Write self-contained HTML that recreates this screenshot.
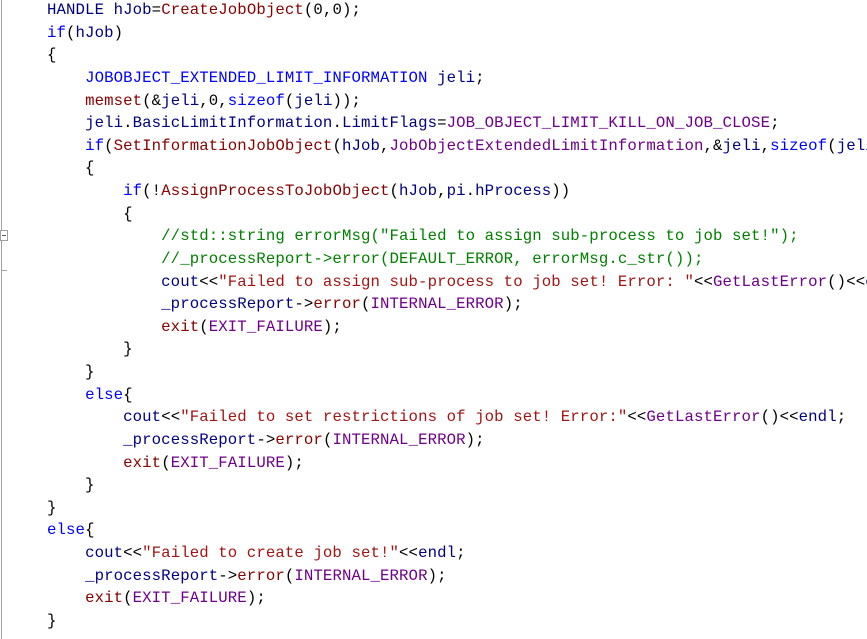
<!DOCTYPE html>
<html><head><style>
body{margin:0;background:#fff;width:867px;height:639px;overflow:hidden;position:relative}
pre{margin:0;position:absolute;left:47px;top:-1px;font-family:"Liberation Mono",monospace;font-size:15.7px;letter-spacing:0.1px;line-height:22.63px;color:#000;white-space:pre}
.k{color:#0000ff}.f{color:#880000}.n{color:#000080}.m{color:#6f008a}.s{color:#a31515}.c{color:#008000}
.bar{position:absolute;left:1px;top:0;width:1px;height:639px;background:#a0a0a0}
.box{position:absolute;left:0;top:230px;width:6px;height:9px;border:1px solid #a0a0a0;background:#fff}
.box:after{content:"";position:absolute;left:1px;top:4px;width:4px;height:1px;background:#555}
.tick{position:absolute;left:1px;top:270px;width:6px;height:1px;background:#a0a0a0}
</style></head><body>
<div class="bar"></div><div class="box"></div><div class="tick"></div>
<pre><span class="n">HANDLE</span> <span class="n">hJob</span>=<span class="f">CreateJobObject</span>(0,0);
<span class="k">if</span>(<span class="n">hJob</span>)
{
    <span class="k">JOBOBJECT_EXTENDED_LIMIT_INFORMATION</span> <span class="n">jeli</span>;
    <span class="f">memset</span>(&amp;<span class="n">jeli</span>,0,<span class="k">sizeof</span>(<span class="n">jeli</span>));
    <span class="n">jeli</span>.<span class="n">BasicLimitInformation</span>.<span class="n">LimitFlags</span>=<span class="m">JOB_OBJECT_LIMIT_KILL_ON_JOB_CLOSE</span>;
    <span class="k">if</span>(<span class="f">SetInformationJobObject</span>(<span class="n">hJob</span>,<span class="m">JobObjectExtendedLimitInformation</span>,&amp;<span class="n">jeli</span>,<span class="k">sizeof</span>(<span class="n">jeli</span>)))
    {
        <span class="k">if</span>(!<span class="f">AssignProcessToJobObject</span>(<span class="n">hJob</span>,<span class="n">pi</span>.<span class="n">hProcess</span>))
        {
            <span class="c">//std::string errorMsg("Failed to assign sub-process to job set!");</span>
            <span class="c">//_processReport-&gt;error(DEFAULT_ERROR, errorMsg.c_str());</span>
            <span class="n">cout</span>&lt;&lt;<span class="s">"Failed to assign sub-process to job set! Error: "</span>&lt;&lt;<span class="m">GetLastError</span>()&lt;&lt;<span class="n">endl</span>;
            <span class="n">_processReport</span>-&gt;<span class="f">error</span>(<span class="m">INTERNAL_ERROR</span>);
            <span class="f">exit</span>(<span class="m">EXIT_FAILURE</span>);
        }
    }
    <span class="k">else</span>{
        <span class="n">cout</span>&lt;&lt;<span class="s">"Failed to set restrictions of job set! Error:"</span>&lt;&lt;<span class="m">GetLastError</span>()&lt;&lt;<span class="n">endl</span>;
        <span class="n">_processReport</span>-&gt;<span class="f">error</span>(<span class="m">INTERNAL_ERROR</span>);
        <span class="f">exit</span>(<span class="m">EXIT_FAILURE</span>);
    }
}
<span class="k">else</span>{
    <span class="n">cout</span>&lt;&lt;<span class="s">"Failed to create job set!"</span>&lt;&lt;<span class="n">endl</span>;
    <span class="n">_processReport</span>-&gt;<span class="f">error</span>(<span class="m">INTERNAL_ERROR</span>);
    <span class="f">exit</span>(<span class="m">EXIT_FAILURE</span>);
}</pre>
</body></html>
